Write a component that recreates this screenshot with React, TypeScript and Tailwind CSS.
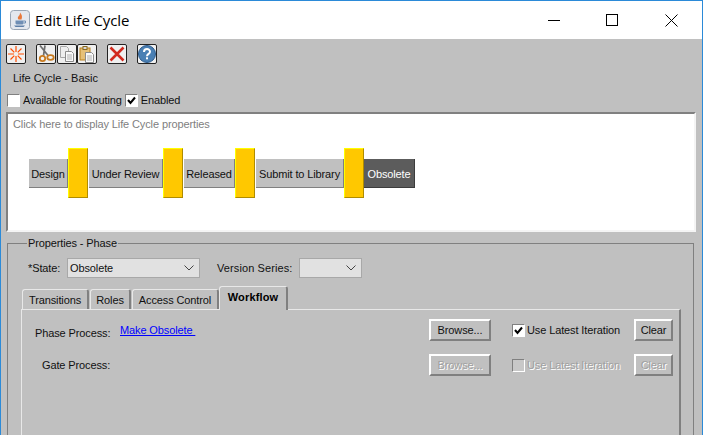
const font = "[font-family:'Liberation_Sans',Arial,sans-serif]"

function ToolButton({ children, className = '' }: { children: React.ReactNode; className?: string }) {
  return (
    <div className={`flex h-[20px] w-[20px] items-center justify-center rounded-[2px] border border-[#222] bg-[#f0f0f0] ${className}`}>
      {children}
    </div>
  )
}

function Check({ checked = false, disabled = false }: { checked?: boolean; disabled?: boolean }) {
  return (
    <div className={`flex h-[13px] w-[13px] shrink-0 items-center justify-center border-t border-l border-t-[#808080] border-l-[#808080] border-r border-b border-r-white border-b-white ${disabled ? 'bg-[#c8c8c8]' : 'bg-white'}`}>
      {checked && (
        <svg width="9" height="9" viewBox="0 0 9 9">
          <path d="M1 4l2.5 3L8 1.5" fill="none" stroke="#000" strokeWidth="2" />
        </svg>
      )}
    </div>
  )
}

function JavaButton({ label, disabled = false, className = '' }: { label: string; disabled?: boolean; className?: string }) {
  return (
    <div className={`flex h-[22px] items-center justify-center border-t-2 border-l-2 border-t-white border-l-white border-r-2 border-b-2 border-r-[#808080] border-b-[#808080] bg-[#c0c0c0] pt-px ${disabled ? 'text-[#a0a0a0] [text-shadow:1px_1px_0_#fff]' : 'text-[#111]'} ${className}`}>
      {label}
    </div>
  )
}

function Select({ value, className = '' }: { value: string; className?: string }) {
  return (
    <div className={`flex h-[20px] items-center justify-between border border-[#a8a8a8] bg-[#e1e1e1] pl-[2px] pr-[5px] ${className}`}>
      <span>{value}</span>
      <svg width="10" height="6" viewBox="0 0 10 6">
        <path d="M0.5 0.5L5 5L9.5 0.5" fill="none" stroke="#444" />
      </svg>
    </div>
  )
}

function Phase({ name, dark = false, className = '' }: { name: string; dark?: boolean; className?: string }) {
  return (
    <div className={`mt-px flex h-[29px] items-center justify-center border-r border-b ${dark ? 'border-r-[#3c3c3c] border-b-[#3c3c3c] bg-[#5c5c5c] text-white' : 'border-r-[#808080] border-b-[#808080] bg-[#c0c0c0] text-[#111]'} pt-[3px] ${className}`}>
      {name}
    </div>
  )
}

function Gate() {
  return <div className="h-[50px] w-[20px] shrink-0 border-t border-l border-t-[#ffff00] border-l-[#ffff00] border-r border-b border-r-[#b08c00] border-b-[#b08c00] bg-[#ffc800]" />
}

function Tab({ label, className = '' }: { label: string; className?: string }) {
  return (
    <div className={`mt-[3px] flex h-[21px] items-center justify-center rounded-t-[3px] border-t border-l border-t-[#e8e8e8] border-l-[#e8e8e8] border-r-2 border-r-[#808080] pt-px ${className}`}>
      {label}
    </div>
  )
}

export default function App() {
  return (
    <div className={`${font} flex h-[435px] w-[703px] flex-col overflow-hidden border-x-[1px] border-t-[1px] border-[#2b8ad8] bg-[#c0c0c0] text-[11px] leading-none tracking-[-0.12px] text-[#111]`}>
      <div className="flex h-[38px] shrink-0 items-center bg-white pl-[9px]">
        <svg width="20" height="20" viewBox="0 0 20 20">
          <rect x="0.5" y="0.5" width="19" height="19" rx="3" fill="#e4e8ee" stroke="#9aa6b4" />
          <path d="M4 15.500h11l-1.500 1.500h-8z" fill="#5d7fa8" />
          <path d="M5.500 10.500h8v2.500c0 1-1 1.500-2 1.500h-4c-1 0-2-.5-2-1.500z" fill="#6f8eb4" />
          <path d="M13.500 11h2v2h-2" fill="none" stroke="#6f8eb4" />
          <path d="M10 2.500c2 2.500 2.500 3.500 1.500 7h-3c-1.500-2 0-3 .5-4 .5.500 1-1.500 1-3z" fill="#e8793a" />
        </svg>
        <span className="ml-[5px] text-[15px] tracking-[-0.1px] text-[#000] [font-family:'Open_Sans',sans-serif]">Edit Life Cycle</span>
        <div className="ml-auto flex items-center">
          <div className="h-px w-[12px] bg-black" />
          <div className="ml-[46px] h-[12px] w-[12px] border border-black" />
          <svg className="ml-[47px] mr-[24px]" width="13" height="13" viewBox="0 0 13 13">
            <path d="M0.500 0.500L12.500 12.500M12.500 0.500L0.500 12.500" stroke="#000" fill="none" />
          </svg>
        </div>
      </div>

      <div className="flex pl-[5px] pt-[5px]">
        <ToolButton>
          <svg width="16" height="16" viewBox="0 0 16 16">
            <path d="M8 0v6M8 10v6M0 8h6M10 8h6M2.500 2.500l3.800 3.800M13.500 2.500L9.700 6.300M2.500 13.500l3.800-3.800M13.500 13.500L9.700 9.700" stroke="#ff4c00" strokeWidth="1.200" fill="none" />
          </svg>
        </ToolButton>
        <ToolButton className="ml-[10px]">
          <svg width="17" height="18" viewBox="0 0 17 18">
            <path d="M2 0.500L10 10.500M7 0.500L5.500 10.500" stroke="#6e6e6e" strokeWidth="1.700" fill="none" />
            <circle cx="4.500" cy="13.500" r="2.700" fill="none" stroke="#c87a1e" strokeWidth="1.800" />
            <ellipse cx="12.500" cy="12.500" rx="3.200" ry="2.300" fill="none" stroke="#c87a1e" strokeWidth="1.800" />
          </svg>
        </ToolButton>
        <ToolButton className="ml-[1px]">
          <svg width="16" height="16" viewBox="0 0 16 16">
            <path d="M1.500 0.500h6l2 2v9h-8z" fill="#eee" stroke="#a8a8a8" />
            <path d="M6.500 5.500h6l2 2v8h-8z" fill="#fafafa" stroke="#8c8c8c" />
            <path d="M8 9h5M8 11h5M8 13h5" stroke="#b0b0b0" />
          </svg>
        </ToolButton>
        <ToolButton>
          <svg width="16" height="17" viewBox="0 0 16 17">
            <rect x="1" y="2" width="10" height="12" fill="#e6c078" stroke="#b8801e" />
            <rect x="4" y="0.500" width="4" height="3" fill="#d8d8d8" stroke="#8a6a20" />
            <path d="M6.500 6.500h6l2 2v8h-8z" fill="#fafafa" stroke="#8c8c8c" />
            <path d="M8 10h5M8 12h5M8 14h5" stroke="#b0b0b0" />
          </svg>
        </ToolButton>
        <ToolButton className="ml-[10px]">
          <svg width="16" height="16" viewBox="0 0 16 16">
            <path d="M1.500 1.500L14.500 14.500M14.500 1.500L1.500 14.500" stroke="#d22a1e" strokeWidth="2.600" fill="none" />
          </svg>
        </ToolButton>
        <ToolButton className="ml-[10px]">
          <svg width="18" height="18" viewBox="0 0 18 18">
            <circle cx="9" cy="9" r="8.500" fill="#4a80b4" stroke="#2c5a8c" />
            <path d="M6 7c0-3.800 6-3.800 6-.3 0 2.200-3 2.200-3 4.600" fill="none" stroke="#fff" strokeWidth="2" />
            <rect x="8" y="12.300" width="2" height="2" fill="#fff" />
          </svg>
        </ToolButton>
      </div>

      <div className="ml-[12px] mt-[9px] tracking-[0px]">Life Cycle - Basic</div>

      <div className="ml-[6px] mt-[10px] flex items-center">
        <Check />
        <span className="ml-[3px]">Available for Routing</span>
        <div className="ml-[3px]"><Check checked /></div>
        <span className="ml-[3px]">Enabled</span>
      </div>

      <div className="ml-[5px] mr-[6px] mt-[5px] flex h-[120px] shrink-0 flex-col border-2 border-t-[#808080] border-l-[#808080] border-r-[#f4f4f4] border-b-[#f4f4f4] bg-white">
        <div className="ml-[5px] mt-[5px] text-[#808080]">Click here to display Life Cycle properties</div>
        <div className="ml-[21px] mt-[18px] flex items-center">
          <Phase name="Design" className="w-[39px]" />
          <Gate />
          <Phase name="Under Review" className="ml-px w-[74px]" />
          <Gate />
          <Phase name="Released" className="ml-px w-[51px]" />
          <Gate />
          <Phase name="Submit to Library" className="ml-px w-[88px]" />
          <Gate />
          <Phase name="Obsolete" dark className="w-[51px]" />
        </div>
      </div>

      <div className="relative ml-[6px] mr-[8px] mt-[11px] flex min-h-0 flex-1 flex-col border border-b-0 border-[#808080] pl-[13px] pr-[12px]">
        <span className="absolute left-[19px] top-[-6px] bg-[#c0c0c0] px-px">Properties - Phase</span>
        <div className="ml-[7px] mt-[14px] flex items-center">
          <span className="w-[39px]">*State:</span>
          <Select value="Obsolete" className="w-[133px]" />
          <span className="ml-[17px] w-[82px] tracking-[0.1px]">Version Series:</span>
          <Select value="" className="w-[63px]" />
        </div>
        <div className="mt-[8px] flex h-[24px] shrink-0 items-start">
          <Tab label="Transitions" className="ml-px w-[67px]" />
          <Tab label="Roles" className="ml-px w-[41px]" />
          <Tab label="Access Control" className="ml-px w-[87px]" />
          <div className="relative z-10 flex h-[24px] w-[69px] items-center justify-center rounded-t-[3px] border-t border-l border-t-[#e8e8e8] border-l-[#e8e8e8] border-r-2 border-r-[#808080] bg-[#c0c0c0] pb-[3px] font-bold tracking-[0.15px] text-black">Workflow</div>
        </div>
        <div className="-mt-px flex flex-1 flex-col border-l border-t border-r-2 border-l-[#e8e8e8] border-t-[#e8e8e8] border-r-[#808080] pl-[13px] pr-[6px]">
          <div className="mt-[9px] flex h-[22px] items-center">
            <span className="mt-[7px] w-[85px]">Phase Process:</span>
            <span className="text-[#0000ff] underline">Make Obsolete&nbsp;</span>
            <JavaButton label="Browse..." className="ml-auto w-[62px]" />
            <div className="ml-[21px]"><Check checked /></div>
            <span className="ml-[2px] w-[107px]">Use Latest Iteration</span>
            <JavaButton label="Clear" className="w-[39px]" />
          </div>
          <div className="mt-[13px] flex h-[22px] items-center">
            <span className="ml-[7px] mt-px w-[78px]">Gate Process:</span>
            <JavaButton label="Browse..." disabled className="ml-auto w-[62px]" />
            <div className="ml-[21px]"><Check disabled /></div>
            <span className="ml-[2px] w-[107px] text-[#a0a0a0] [text-shadow:1px_1px_0_#fff]">Use Latest Iteration</span>
            <JavaButton label="Clear" disabled className="w-[39px]" />
          </div>
        </div>
      </div>
    </div>
  )
}
